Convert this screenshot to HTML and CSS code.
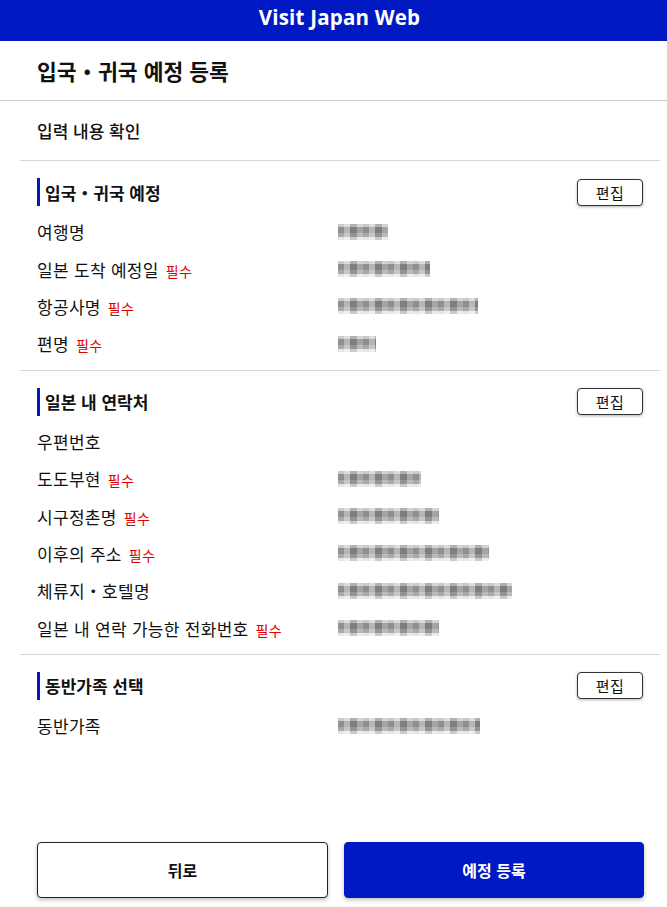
FILE: index.html
```html
<!DOCTYPE html>
<html lang="ko">
<head>
<meta charset="utf-8">
<title>Visit Japan Web</title>
<link rel="stylesheet" href="styles.css">
</head>
<body>
<div class="page">
  <header class="topbar">Visit Japan Web</header>
  <div class="page-title">입국・귀국 예정 등록</div>
  <div class="content">
    <div class="subtitle">입력 내용 확인</div>

    <section class="section">
      <div class="sec-head">
        <h2 class="sec-title">입국・귀국 예정</h2>
        <button class="edit">편집</button>
      </div>
      <div class="row"><div class="label">여행명</div><div class="value"><span class="blur" style="width:50px"></span></div></div>
      <div class="row"><div class="label">일본 도착 예정일 <span class="req">필수</span></div><div class="value"><span class="blur" style="width:92px"></span></div></div>
      <div class="row"><div class="label">항공사명 <span class="req">필수</span></div><div class="value"><span class="blur" style="width:140px"></span></div></div>
      <div class="row"><div class="label">편명 <span class="req">필수</span></div><div class="value"><span class="blur" style="width:38px"></span></div></div>
    </section>

    <section class="section">
      <div class="sec-head">
        <h2 class="sec-title">일본 내 연락처</h2>
        <button class="edit">편집</button>
      </div>
      <div class="row"><div class="label">우편번호</div><div class="value"></div></div>
      <div class="row"><div class="label">도도부현 <span class="req">필수</span></div><div class="value"><span class="blur" style="width:83px"></span></div></div>
      <div class="row"><div class="label">시구정촌명 <span class="req">필수</span></div><div class="value"><span class="blur" style="width:101px"></span></div></div>
      <div class="row"><div class="label">이후의 주소 <span class="req">필수</span></div><div class="value"><span class="blur" style="width:151px"></span></div></div>
      <div class="row"><div class="label">체류지・호텔명</div><div class="value"><span class="blur" style="width:174px"></span></div></div>
      <div class="row"><div class="label">일본 내 연락 가능한 전화번호 <span class="req">필수</span></div><div class="value"><span class="blur" style="width:101px"></span></div></div>
    </section>

    <section class="section last">
      <div class="sec-head">
        <h2 class="sec-title">동반가족 선택</h2>
        <button class="edit">편집</button>
      </div>
      <div class="row"><div class="label">동반가족</div><div class="value"><span class="blur" style="width:142px"></span></div></div>
    </section>
  </div>

  <div class="actions">
    <button class="btn back">뒤로</button>
    <button class="btn primary">예정 등록</button>
  </div>
</div>
</body>
</html>
```

FILE: styles.css
```css
* { box-sizing: border-box; }
html, body { margin: 0; padding: 0; background: #fff; }
body {
  font-family: "Noto Sans CJK KR", "Noto Sans", sans-serif;
  color: #111;
}
.page {
  min-height: 907px;
  display: flex;
  flex-direction: column;
}
.topbar {
  height: 41px;
  background: #0019c3;
  color: #fff;
  font-family: "Open Sans", "Noto Sans", sans-serif;
  font-weight: 700;
  font-size: 20.5px;
  display: flex;
  align-items: center;
  justify-content: center;
  letter-spacing: 0.2px;
  padding: 0 0 8px 12px;
}
.page-title {
  height: 60px;
  padding-left: 37px;
  display: flex;
  align-items: center;
  font-size: 21.5px;
  font-weight: 700;
  border-bottom: 1px solid #cfcfcf;
}
.content {
  padding: 0 7px 0 20px;
}
.subtitle {
  height: 60px;
  padding-left: 17px;
  display: flex;
  align-items: center;
  font-size: 17px;
  font-weight: 500;
  border-bottom: 1px solid #d6d6d6;
}
.section {
  padding: 17px 17px 7px 17px;
  border-bottom: 1px solid #d6d6d6;
}
.section.last { border-bottom: none; }
.sec-head {
  height: 28px;
  display: flex;
  align-items: center;
  justify-content: space-between;
  margin-bottom: 7px;
}
.sec-title {
  margin: 0;
  height: 28px;
  display: flex;
  align-items: center;
  border-left: 3px solid #0019c3;
  padding-left: 5px;
  font-size: 17px;
  font-weight: 700;
}
.edit {
  width: 66px;
  height: 27px;
  background: #fff;
  border: 1px solid #333;
  border-radius: 4px;
  box-shadow: 0 1px 3px rgba(0,0,0,0.3);
  font-family: "Noto Sans CJK KR", sans-serif;
  font-size: 15px;
  color: #111;
  padding: 0;
  letter-spacing: 0.5px;
}
.row {
  height: 37.4px;
  display: grid;
  grid-template-columns: 301px 1fr;
  align-items: center;
  font-size: 17px;
  letter-spacing: 0.3px;
}
.req {
  color: #e00000;
  font-size: 14px;
  margin-left: 2px;
}
.value { display: flex; align-items: center; }
.blur {
  display: inline-block;
  height: 16px;
  background:
    repeating-linear-gradient(90deg, rgba(255,255,255,0) 0 6px, rgba(255,255,255,0.35) 6px 12px, rgba(0,0,0,0.12) 12px 19px, rgba(255,255,255,0.2) 19px 25px) ,
    linear-gradient(180deg, #c9c9c9 0 3px, #8f8f8f 3px 9px, #a9a9a9 9px 13px, #e6e6e6 13px 16px);
}
.actions {
  margin-top: auto;
  display: grid;
  grid-template-columns: 291px 300px;
  gap: 16px;
  padding: 0 0 9px 37px;
}
.btn {
  height: 56px;
  border-radius: 4px;
  font-family: "Noto Sans CJK KR", sans-serif;
  font-size: 16px;
  font-weight: 700;
  box-shadow: 0 2px 4px rgba(0,0,0,0.25);
}
.back {
  background: #fff;
  border: 1px solid #222;
  color: #111;
}
.primary {
  background: #0019c3;
  border: 1px solid #0019c3;
  color: #fff;
}
```
